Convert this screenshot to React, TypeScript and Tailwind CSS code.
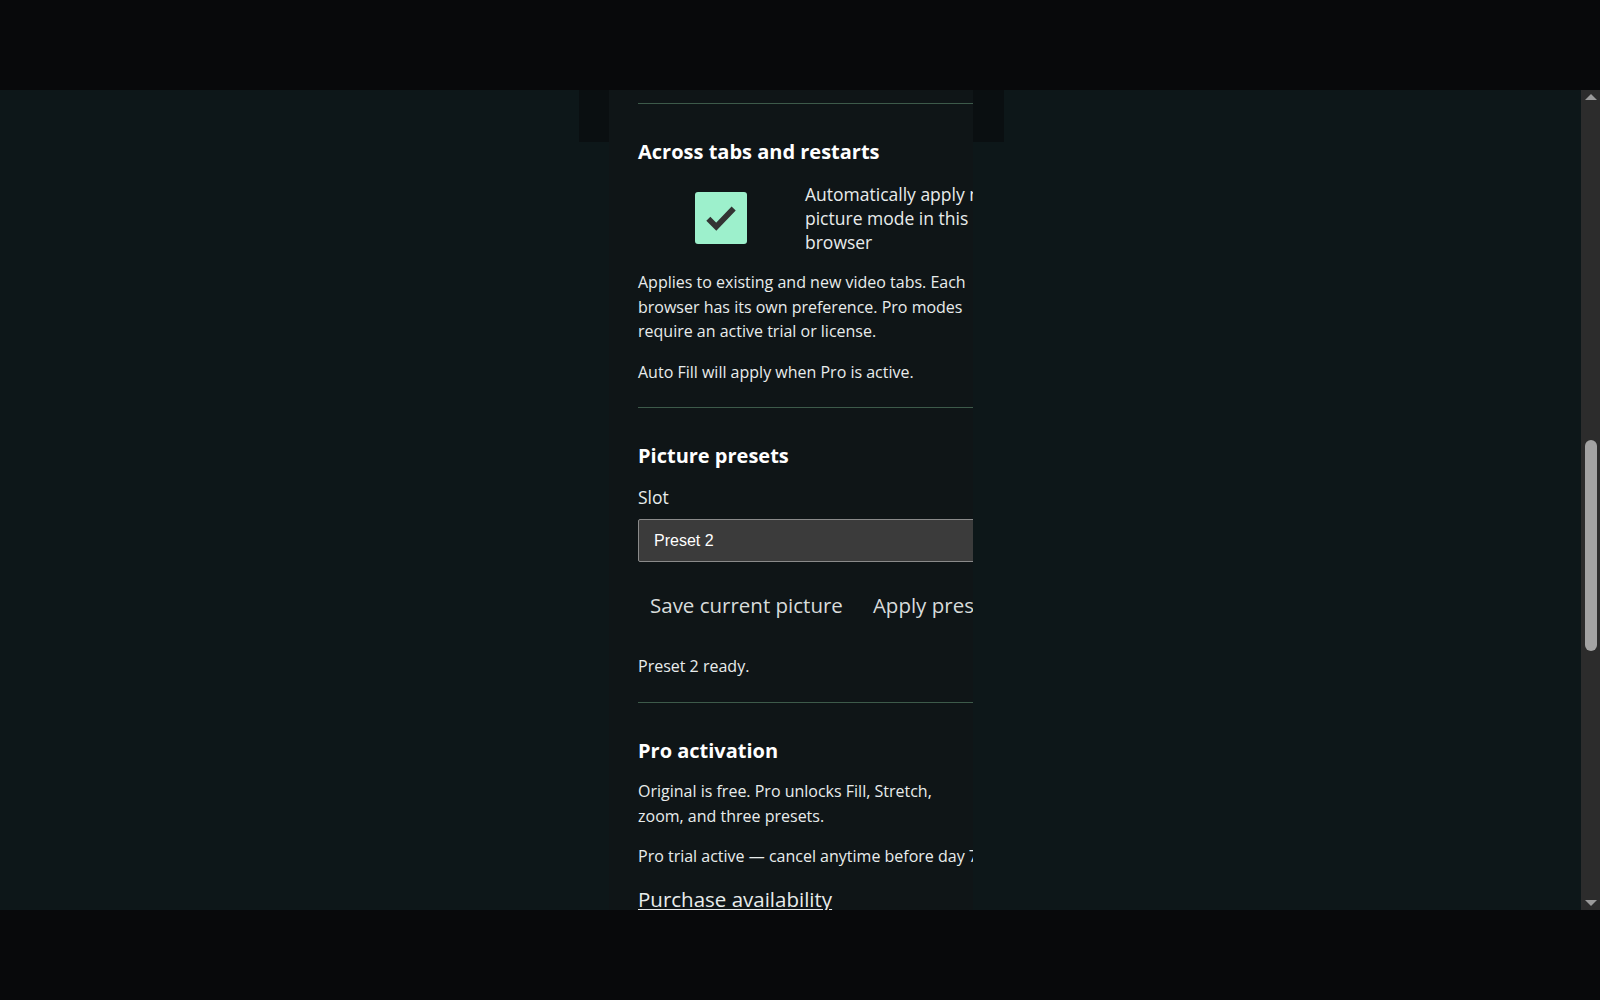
export default function App() {
  const font = { fontFamily: '"Open Sans", "Noto Sans", sans-serif' }
  return (
    <div className="flex h-[1000px] w-[1600px] flex-col overflow-hidden bg-[#08090b]" style={font}>
      <div className="h-[90px] shrink-0" />
      <div className="flex h-[820px] shrink-0">
        <div className="relative flex flex-1 justify-center overflow-hidden bg-[#0d1719]">
          <div className="absolute left-[579px] top-0 h-[52px] w-[425px] bg-[#0a0f11]" />
          <div className="relative ml-[609px] mr-auto w-[364px] overflow-hidden bg-[#0f1517]">
            <div className="w-[375px] pl-[29px] text-[#e8ecec]">
              <div className="mt-[13px] h-px w-[400px] bg-[#3d5a4a]" />
              <h2 className="mt-[35px] text-[20px] font-bold leading-[26px] text-white">Across tabs and restarts</h2>
              <div className="mt-[15px] flex">
                <div className="flex w-[167px] items-start justify-center pt-[12px] pr-[1px]">
                  <div className="flex h-[52px] w-[52px] items-center justify-center rounded-[3px] bg-[#9df0cc]">
                    <svg width="38" height="38" viewBox="0 0 24 24">
                      <path d="M4 12.5l5 5L20 6" fill="none" stroke="#333" strokeWidth="3.6" strokeLinecap="butt" />
                    </svg>
                  </div>
                </div>
                <p className="w-[175px] whitespace-nowrap pt-[2px] text-[17.5px] leading-[24px]">
                  Automatically apply my<br />picture mode in this<br />browser
                </p>
              </div>
              <p className="mt-[16px] w-[345px] text-[16px] leading-[24.5px]">
                Applies to existing and new video tabs. Each browser has its own preference. Pro modes require an active trial or license.
              </p>
              <p className="mt-[16px] text-[16px] leading-[24.5px]">Auto Fill will apply when Pro is active.</p>
              <div className="mt-[23px] h-px w-[400px] bg-[#3d5a4a]" />
              <h2 className="mt-[35px] text-[20px] font-bold leading-[26px] text-white">Picture presets</h2>
              <p className="mt-[16px] text-[17.5px] leading-[24px]">Slot</p>
              <div className="mt-[10px] flex h-[43px] w-[400px] items-center rounded-[2px] border border-[#8a8a8a] bg-[#3b3b3b] pl-[15px] text-[16px] text-white" style={{ fontFamily: '"Liberation Sans", Arial, sans-serif' }}>
                Preset 2
              </div>
              <div className="mt-[29px] flex gap-[30px] whitespace-nowrap pl-[12px] text-[20.5px] leading-[28px] text-[#d8dcdc]">
                <span>Save current picture</span>
                <span>Apply preset</span>
              </div>
              <p className="mt-[35px] text-[16px] leading-[24px]">Preset 2 ready.</p>
              <div className="mt-[24px] h-px w-[400px] bg-[#3d5a4a]" />
              <h2 className="mt-[35px] text-[20px] font-bold leading-[26px] text-white">Pro activation</h2>
              <p className="mt-[15px] w-[340px] text-[16px] leading-[24.5px]">
                Original is free. Pro unlocks Fill, Stretch, zoom, and three presets.
              </p>
              <p className="mt-[16px] whitespace-nowrap text-[16px] leading-[24.5px]">Pro trial active — cancel anytime before day 7.</p>
              <p className="mt-[16px] text-[20.5px] leading-[28px] underline">Purchase availability</p>
            </div>
          </div>
        </div>
        <div className="flex w-[19px] flex-col items-center bg-[#2c2c2c] py-[4px]">
          <div className="h-0 w-0 border-x-[6px] border-b-[6px] border-x-transparent border-b-[#9a9a9a]" />
          <div className="mt-[340px] h-[211px] w-[12px] rounded-full bg-[#a3a3a3]" />
          <div className="mt-auto h-0 w-0 border-x-[6px] border-t-[6px] border-x-transparent border-t-[#9a9a9a]" />
        </div>
      </div>
    </div>
  )
}
